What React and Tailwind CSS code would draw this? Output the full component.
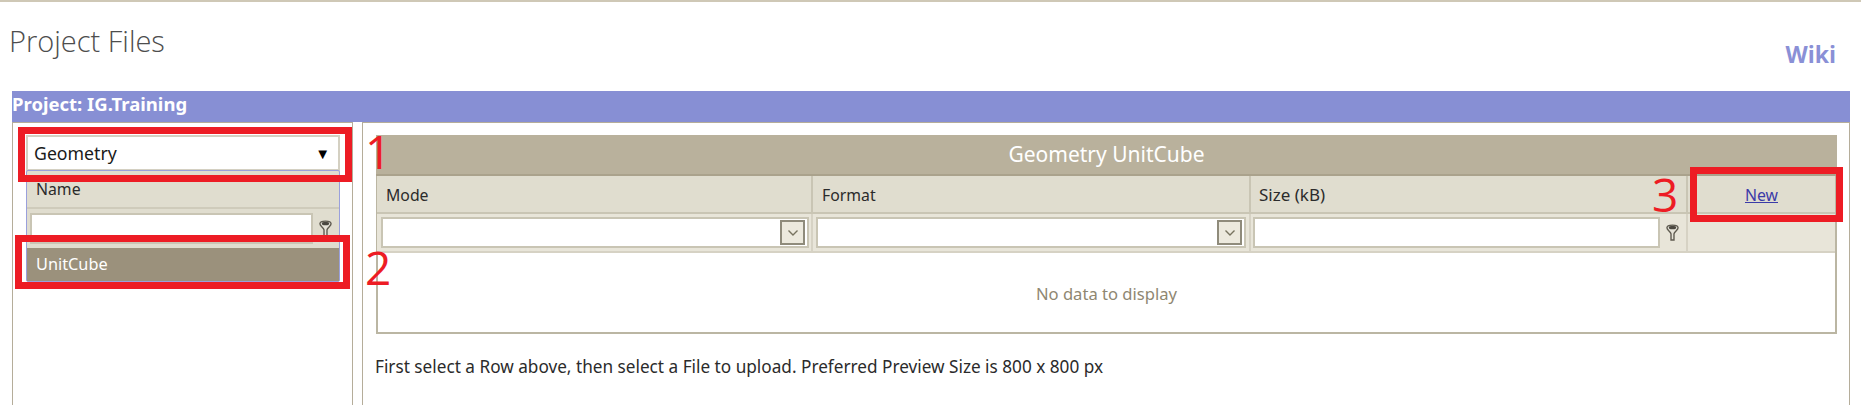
import React from "react";

const FilterIcon = () => (
  <svg width="13" height="19" viewBox="0 0 14 20" className="shrink-0">
    <path d="M1 5 C1 1 13 1 13 5 C13 7.5 9 9 8.6 11.5 L8.6 18 L5.4 18 L5.4 11.5 C5 9 1 7.5 1 5 Z" fill="#e6e3d8" stroke="#5f5b50" strokeWidth="1.5" />
    <ellipse cx="7" cy="4.6" rx="4" ry="2" fill="#4a473f" />
  </svg>
);

const SelectBox = () => (
  <div className="flex-1 h-[31px] bg-white border-2 border-[#c9c5b4] flex items-center justify-end pr-[2px]">
    <div className="w-[25px] h-[25px] bg-[#ece9dd] border-2 border-[#8f8b7b] flex items-center justify-center">
      <svg width="12" height="8" viewBox="0 0 12 8">
        <path d="M1.5 1.5 L6 6 L10.5 1.5" fill="none" stroke="#77735f" strokeWidth="1.4" />
      </svg>
    </div>
  </div>
);

const RedBox = ({ className }) => <div className={`absolute border-[7px] border-[#ed1c24] ${className}`} />;

export default function App() {
  return (
    <div className="relative h-[405px] w-[1861px] overflow-hidden bg-white text-[15.8px] text-[#2b2b2b] font-['Noto_Sans',sans-serif]">
      <div className="h-[2px] bg-[#cfc8b6]" />

      <div className="h-[89px] pl-[9px] pr-[25px] flex justify-between">
        <h1 className="mt-[21px] text-[29px] leading-[36px] font-light text-[#4d4d4d] font-['Open_Sans',sans-serif]">Project Files</h1>
        <a className="mt-[38px] text-[23px] leading-[28px] font-bold text-[#8a90d6] font-['Open_Sans',sans-serif]">Wiki</a>
      </div>

      <div className="mx-[12px] w-[1838px]">
        <div className="h-[31px] bg-[#878fd4] leading-[26px] text-[18.5px] font-bold text-white">Project: IG.Training</div>

        <div className="flex gap-[9px] h-[290px]">
          {/* left panel */}
          <div className="w-[341px] border border-[#b5ad9a] pt-[12px] pl-[13px] pr-[12px]">
            <div className="h-[36px] bg-white border-2 border-[#d4d0c2] flex items-center justify-between pl-[6px] pr-[8px] text-[17.7px] text-[#1a1a1a]">
              <span>Geometry</span>
              <span className="text-[15px] leading-none text-black">▼</span>
            </div>
            <div className="border border-[#9aa0dc] rounded-[2px] bg-[#e0ddcf] -mt-[1px]">
              <div className="h-[38px] pl-[9px] leading-[36px] border-b-2 border-[#cfcbbb]">Name</div>
              <div className="h-[39px] flex items-center gap-[6px] pl-[3px] pr-[4px]">
                <div className="w-[283px] h-[31px] bg-white border-2 border-[#c9c5b4]" />
                <FilterIcon />
              </div>
              <div className="h-[33px] bg-[#9b917c] pl-[9px] leading-[32px] text-[16.3px] text-white">UnitCube</div>
            </div>
          </div>

          {/* right panel */}
          <div className="flex-1 border border-[#b5ad9a] pt-[12px] pl-[13px] pr-[12px]">
            <div className="border-x-2 border-b-2 border-[#bbb6a3]">
              <div className="h-[41px] -mx-[2px] bg-[#b9b19c] border-b-2 border-[#aaa28c] text-center text-[21px] leading-[38px] text-white">Geometry UnitCube</div>
              <div className="grid grid-cols-[436px_438px_437px_1fr] -ml-[1px]">
                <div className="h-[38px] bg-[#e0ddcf] border-r-2 border-b-2 border-[#c9c5b4] pl-[9px] leading-[38px]">Mode</div>
                <div className="h-[38px] bg-[#e0ddcf] border-r-2 border-b-2 border-[#c9c5b4] pl-[9px] leading-[38px]">Format</div>
                <div className="h-[38px] bg-[#e0ddcf] border-r-2 border-b-2 border-[#c9c5b4] pl-[8px] leading-[38px] text-[17px]">Size (kB)</div>
                <div className="h-[38px] bg-[#e0ddcf] border-b-2 border-[#c9c5b4] text-center leading-[38px]">
                  <a className="underline text-[#3b3ba8]">New</a>
                </div>
                <div className="h-[39px] bg-[#e8e5d9] border-r-2 border-b-2 border-[#d6d2c4] flex items-center pl-[4px] pr-[2px]"><SelectBox /></div>
                <div className="h-[39px] bg-[#e8e5d9] border-r-2 border-b-2 border-[#d6d2c4] flex items-center pl-[3px] pr-[3px]"><SelectBox /></div>
                <div className="h-[39px] bg-[#e8e5d9] border-r-2 border-b-2 border-[#d6d2c4] flex items-center gap-[6px] pl-[2px] pr-[7px]">
                  <div className="flex-1 h-[31px] bg-white border-2 border-[#c9c5b4]" />
                  <FilterIcon />
                </div>
                <div className="h-[39px] bg-[#e8e5d9] border-b-2 border-[#d6d2c4]" />
              </div>
              <div className="h-[79px] pt-[3px] flex items-center justify-center text-[16.6px] text-[#8f8772]">No data to display</div>
            </div>
            <p className="mt-[23px] -ml-[1px] leading-[20px] text-[17.2px]">First select a Row above, then select a File to upload. Preferred Preview Size is 800 x 800 px</p>
          </div>
        </div>
      </div>

      {/* red annotations drawn over the screenshot */}
      <RedBox className="left-[18px] top-[127px] w-[334px] h-[55px]" />
      <RedBox className="left-[15px] top-[235px] w-[335px] h-[54px]" />
      <RedBox className="left-[1690px] top-[167px] w-[153px] h-[55px]" />
      <span className="absolute left-[365px] top-[121px] text-[46px] leading-[60px] text-[#ed1c24] font-['Open_Sans',sans-serif]">1</span>
      <span className="absolute left-[365px] top-[237px] text-[46px] leading-[60px] text-[#ed1c24] font-['Open_Sans',sans-serif]">2</span>
      <span className="absolute left-[1652px] top-[164px] text-[46px] leading-[60px] text-[#ed1c24] font-['Open_Sans',sans-serif]">3</span>
    </div>
  );
}
